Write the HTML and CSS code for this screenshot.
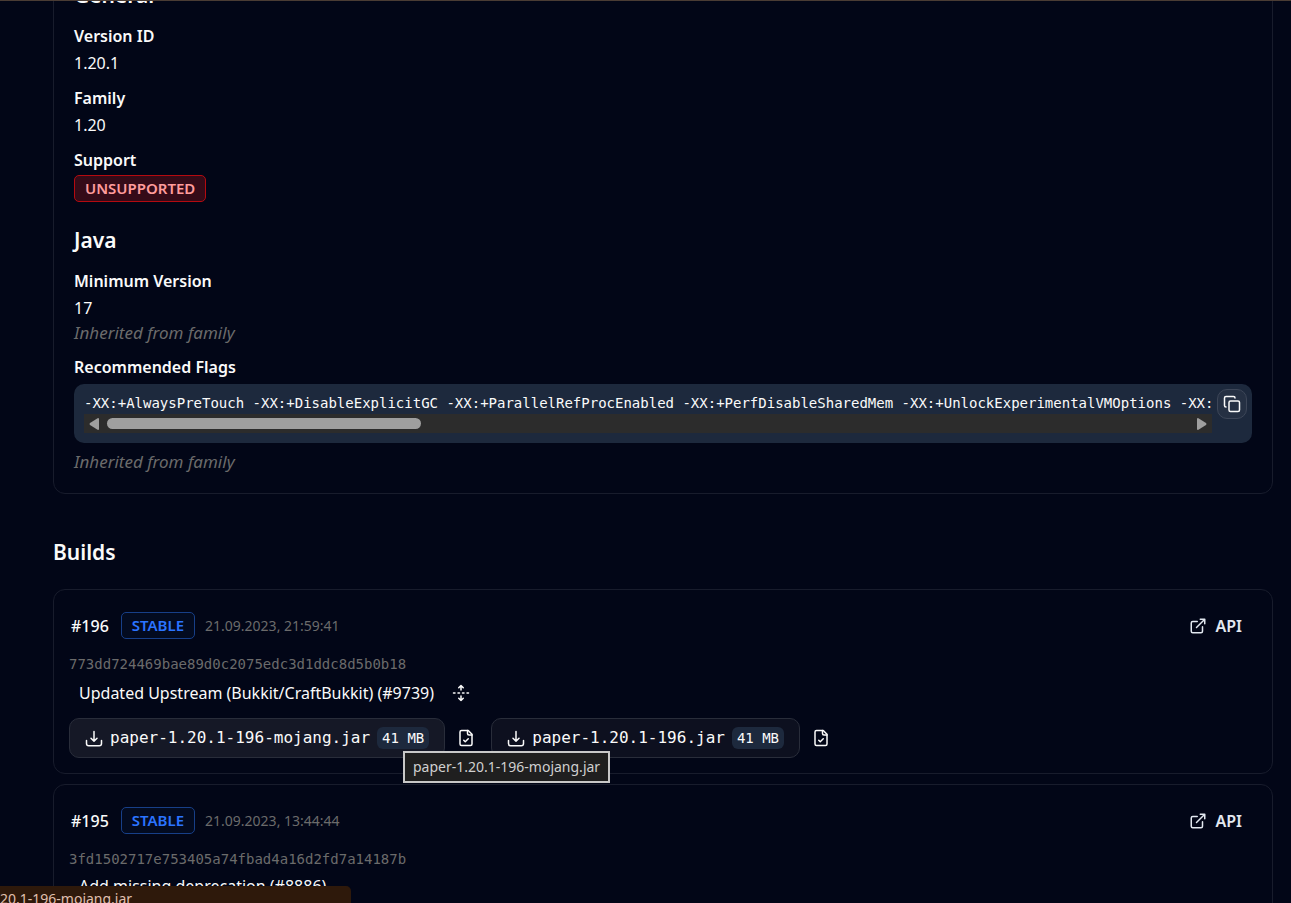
FILE: index.html
```
<!DOCTYPE html>
<html lang="en">
<head>
  <meta charset="UTF-8" />
  <meta name="viewport" content="width=device-width, initial-scale=1.0"/>
  <title>Paper 1.20.1</title>
  <link rel="stylesheet" href="styles.css">
</head>
<body>
  <svg class="sprite" aria-hidden="true">
    <symbol id="icon-copy" viewBox="0 0 24 24">
      <rect x="8" y="8" width="14" height="14" rx="2"/>
      <path d="M4 16c-1.1 0-2-.9-2-2V4c0-1.1.9-2 2-2h10c1.1 0 2 .9 2 2"/>
    </symbol>
    <symbol id="icon-external" viewBox="0 0 24 24">
      <path d="M15 3h6v6M10 14 21 3M18 13v6a2 2 0 0 1-2 2H5a2 2 0 0 1-2-2V8a2 2 0 0 1 2-2h6"/>
    </symbol>
    <symbol id="icon-download" viewBox="0 0 24 24">
      <path d="M12 2v13M8 11l4 4 4-4M2 14v4a3 3 0 0 0 3 3h14a3 3 0 0 0 3-3v-4"/>
    </symbol>
    <symbol id="icon-file-check" viewBox="0 0 24 24">
      <path d="M15 2H6a2 2 0 0 0-2 2v16a2 2 0 0 0 2 2h12a2 2 0 0 0 2-2V7Z"/>
      <path d="M14 2v4a2 2 0 0 0 2 2h4M9 15l2 2 4-4"/>
    </symbol>
    <symbol id="icon-unfold" viewBox="0 0 24 24">
      <path d="M12 22v-6M12 8V2M4 12H2M10 12H8M16 12h-2M22 12h-2M15 19l-3 3-3-3M15 5l-3-3-3 3"/>
    </symbol>
  </svg>

  <main>
    <section class="card details">
      <h2>General</h2>
      <dl>
        <dt>Version ID</dt>
        <dd>1.20.1</dd>
        <dt>Family</dt>
        <dd>1.20</dd>
        <dt>Support</dt>
        <dd><span class="badge unsupported">UNSUPPORTED</span></dd>
      </dl>

      <h2>Java</h2>
      <dl>
        <dt>Minimum Version</dt>
        <dd>17</dd>
        <dd class="inherited">Inherited from family</dd>
        <dt>Recommended Flags</dt>
        <dd>
          <div class="flags">
            <div class="flags-scroll">
              <code>-XX:+AlwaysPreTouch -XX:+DisableExplicitGC -XX:+ParallelRefProcEnabled -XX:+PerfDisableSharedMem -XX:+UnlockExperimentalVMOptions -XX:+UseG1GC</code>
              <div class="scrollbar">
                <svg class="arrow" viewBox="0 0 10 12"><path d="M9 0 1 5Q0 6 1 7l8 5Q10 12 10 11V1Q10 0 9 0Z"/></svg>
                <div class="track"><div class="thumb"></div></div>
                <svg class="arrow" viewBox="0 0 10 12"><path d="M1 0 9 5Q10 6 9 7L1 12Q0 12 0 11V1Q0 0 1 0Z"/></svg>
              </div>
            </div>
            <button class="copy" type="button" aria-label="Copy flags"><svg class="icon"><use href="#icon-copy"/></svg></button>
          </div>
        </dd>
        <dd class="inherited">Inherited from family</dd>
      </dl>
    </section>

    <h2 class="builds-title">Builds</h2>
    <div class="builds">
      <article class="card build">
        <header>
          <span class="number">#196</span>
          <span class="badge stable">STABLE</span>
          <time>21.09.2023, 21:59:41</time>
          <a class="api" href="#"><svg class="icon"><use href="#icon-external"/></svg>API</a>
        </header>
        <p class="hash">773dd724469bae89d0c2075edc3d1ddc8d5b0b18</p>
        <p class="message">Updated Upstream (Bukkit/CraftBukkit) (#9739)
          <button type="button" aria-label="Expand"><svg class="icon"><use href="#icon-unfold"/></svg></button>
        </p>
        <div class="downloads">
          <div class="download-wrap">
            <a class="download active" href="#"><svg class="icon"><use href="#icon-download"/></svg>paper-1.20.1-196-mojang.jar<span class="size">41 MB</span></a>
            <div class="tooltip" role="tooltip">paper-1.20.1-196-mojang.jar</div>
          </div>
          <button class="checksum" type="button" aria-label="Copy checksum"><svg class="icon"><use href="#icon-file-check"/></svg></button>
          <a class="download" href="#"><svg class="icon"><use href="#icon-download"/></svg>paper-1.20.1-196.jar<span class="size">41 MB</span></a>
          <button class="checksum" type="button" aria-label="Copy checksum"><svg class="icon"><use href="#icon-file-check"/></svg></button>
        </div>
      </article>

      <article class="card build">
        <header>
          <span class="number">#195</span>
          <span class="badge stable">STABLE</span>
          <time>21.09.2023, 13:44:44</time>
          <a class="api" href="#"><svg class="icon"><use href="#icon-external"/></svg>API</a>
        </header>
        <p class="hash">3fd1502717e753405a74fbad4a16d2fd7a14187b</p>
        <p class="message">Add missing deprecation (#8886)</p>
      </article>
    </div>
  </main>

  <div class="status">20.1-196-mojang.jar</div>
</body>
</html>
```
FILE: styles.css
```
* {
  box-sizing: border-box;
}
html {
  height: 100%;
  overflow: hidden;
}
body {
  margin: 0;
  height: 100%;
  overflow: hidden;
  background: #020617;
  color: #fafafa;
  font-family: 'Segoe UI', 'Noto Sans', 'Open Sans', sans-serif;
  font-size: 16px;
  line-height: 26px;
}
body::before {
  content: "";
  position: fixed;
  inset: 0 0 auto;
  height: 1px;
  background: #4a3c34;
}
main {
  margin-top: -42px;
  padding: 0 18px 0 53px;
}
h2, p, dl, dd {
  margin: 0;
}
h2 {
  font-size: 21px;
  font-weight: 600;
  line-height: 32px;
}
button {
  display: flex;
  padding: 0;
  border: none;
  background: none;
  color: inherit;
  cursor: pointer;
}
a {
  color: inherit;
  text-decoration: none;
}
.sprite {
  display: none;
}
.icon {
  width: 18px;
  height: 18px;
  flex: none;
  fill: none;
  stroke: currentColor;
  stroke-width: 2;
  stroke-linecap: round;
  stroke-linejoin: round;
}
.card {
  border: 1px solid #181c2c;
  border-radius: 12px;
}

/* version details */
.details {
  padding: 20px 20px 19px;
}
.details h2 {
  margin-bottom: 11px;
}
.details dl + h2 {
  margin-top: 22px;
}
dt {
  font-weight: 600;
  line-height: 28px;
}
dd + dt {
  margin-top: 8px;
}
.inherited {
  color: #6b6b6b;
  font-size: 17px;
  font-style: italic;
  line-height: 24px;
}
.badge {
  display: block;
  width: fit-content;
  padding: 0 10px;
  border: 1px solid;
  border-radius: 5px;
  font-size: 15px;
  font-weight: 600;
  line-height: 25px;
}
.unsupported {
  margin-top: 1px;
  background: #350b18;
  border-color: #b50a10;
  color: #ff9c9c;
}
.stable {
  background: #030b20;
  border-color: #173f88;
  color: #2b74ff;
}
.flags {
  display: flex;
  gap: 5px;
  margin: 3px 0 7px;
  padding: 5px 5px 10px 10px;
  border-radius: 10px;
  background: #1d293d;
}
.flags-scroll {
  flex: 1;
  min-width: 0;
  padding-top: 3px;
  overflow: hidden;
}
.flags code {
  display: block;
  overflow: hidden;
  white-space: nowrap;
  line-height: 22px;
}
code, .hash, .size {
  font-family: Consolas, 'DejaVu Sans Mono', monospace;
  font-size: 14px;
}
.scrollbar {
  display: flex;
  align-items: center;
  gap: 8px;
  height: 19px;
  padding: 0 5px;
  background: #2c2c2c;
}
.arrow {
  width: 10px;
  height: 12px;
  fill: #9f9f9f;
}
.track {
  flex: 1;
}
.thumb {
  width: 29%;
  height: 11px;
  border-radius: 6px;
  background: #9f9f9f;
}
.copy {
  width: 30px;
  height: 30px;
  align-items: center;
  justify-content: center;
  border: 1px solid #3d4658;
  border-radius: 10px;
  background: #253043;
}

/* builds */
.builds-title {
  margin: 42px 0 21px;
}
.builds {
  display: flex;
  flex-direction: column;
  gap: 10px;
}
.build {
  padding: 22px 15px 15px;
}
.build header {
  display: flex;
  align-items: center;
  gap: 10px;
  padding: 0 15px 0 2px;
}
.number {
  margin-right: 2px;
  font-weight: 500;
}
time {
  color: #6b6b6b;
  font-size: 14px;
}
.api {
  display: flex;
  align-items: center;
  gap: 8px;
  margin-left: auto;
  color: #e2e8f0;
  font-weight: 600;
}
.hash {
  margin-top: 12px;
  color: #6b6b6b;
}
.message {
  display: flex;
  align-items: center;
  gap: 18px;
  padding: 3px 10px 4px;
  line-height: 22px;
}
.message button {
  padding: 4px 0;
}
.downloads {
  display: flex;
  align-items: center;
  gap: 12px;
  margin-top: 8px;
}
.download-wrap {
  position: relative;
}
.download {
  display: flex;
  align-items: center;
  gap: 7px;
  height: 40px;
  padding: 0 15px;
  border: 1px solid #292d3a;
  border-radius: 10px;
  background: #0d101f;
  font-family: Consolas, 'DejaVu Sans Mono', monospace;
}
.checksum + .download {
  margin-left: 4px;
}
.active {
  background: #151826;
}
.download .icon {
  margin-top: 2px;
}
.size {
  padding: 0 5px;
  border-radius: 6px;
  background: #1d293d;
  line-height: 22px;
}
.tooltip {
  position: absolute;
  z-index: 1;
  top: 33px;
  left: 334px;
  padding: 2px 8px;
  border: 2px solid #c8c8c8;
  background: #1f1f1f;
  color: #d0d0d0;
  font-size: 14px;
  line-height: 24px;
  white-space: nowrap;
}
.status {
  position: fixed;
  z-index: 2;
  bottom: 0;
  left: 0;
  width: 351px;
  height: 17px;
  border-radius: 0 5px 0 0;
  background: #2e190b;
  color: #e0c0b0;
  font-size: 14px;
  overflow: hidden;
}
```
